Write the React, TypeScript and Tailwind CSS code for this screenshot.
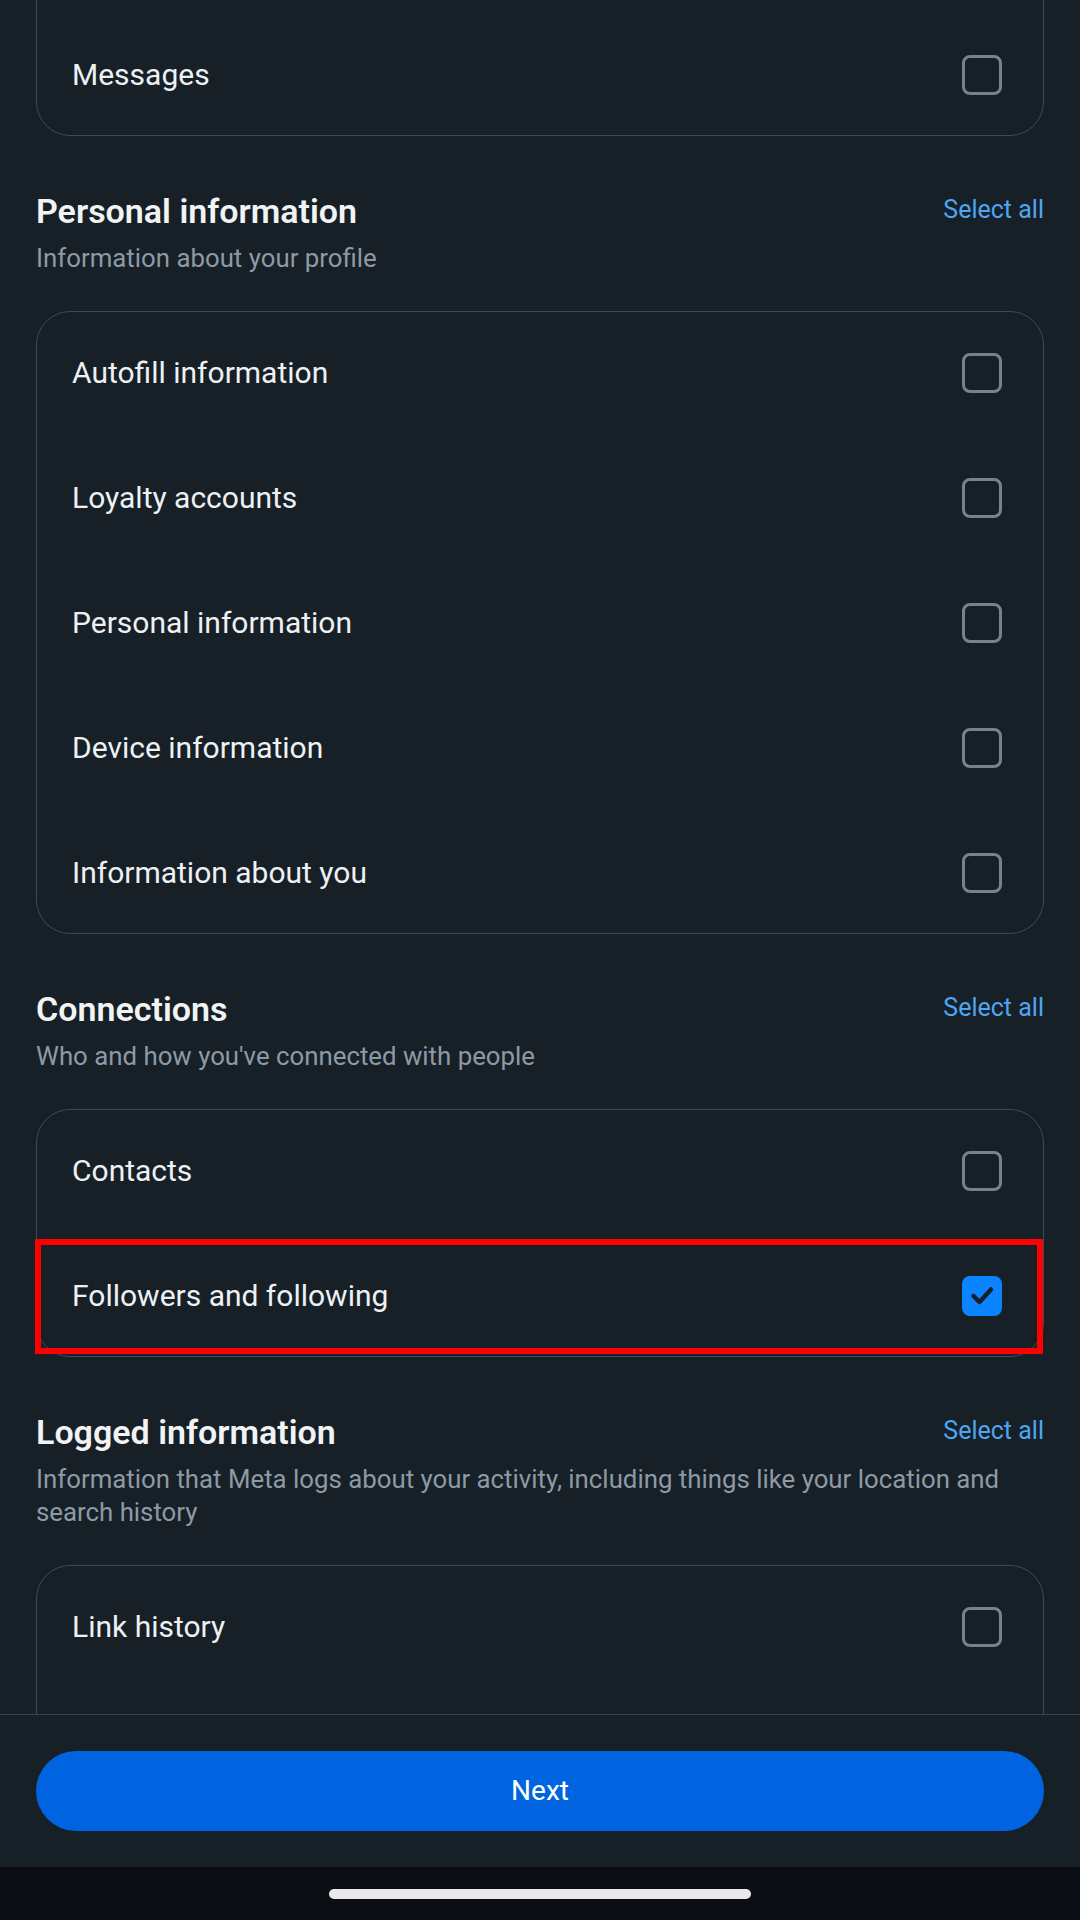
import React from 'react';

type Item = { label: string; checked?: boolean; highlight?: boolean };

const Checkbox = ({ checked }: { checked?: boolean }) => {
	if (checked) {
		return (
			<div className="w-[40px] h-[40px] rounded-[8px] bg-[#0a84ff] flex items-center justify-center">
				<svg width="40" height="40" viewBox="0 0 40 40" fill="none">
					<path
						d="M11.5 20 L17.5 26 L29 13.5"
						stroke="#17202a"
						strokeWidth="4.5"
						strokeLinecap="round"
						strokeLinejoin="round"
					/>
				</svg>
			</div>
		);
	}
	return <div className="w-[40px] h-[40px] rounded-[8px] border-[3px] border-[#73838f]" />;
};

const Row = ({ item }: { item: Item }) => (
	<div className="relative h-[125px] flex items-center justify-between pl-[35px] pr-[41px]">
		<span className="text-[30px] text-[#eef1f3]">{item.label}</span>
		<Checkbox checked={item.checked} />
		{/* red annotation box from the screenshot */}
		{item.highlight && (
			<div className="absolute left-[-2px] right-[0px] top-[6px] bottom-[4px] border-[6px] border-[#ff0000]" />
		)}
	</div>
);

const Card = ({ items, className = '' }: { items: Item[]; className?: string }) => (
	<div className={`border-[1.5px] border-[#3b4b58] rounded-[34px] ${className}`}>
		<div className="-my-[2px]">
			{items.map((it) => (
				<Row key={it.label} item={it} />
			))}
		</div>
	</div>
);

const SectionHeader = ({ title, subtitle }: { title: string; subtitle: string }) => (
	<div className="mt-[57px] mb-[36px]">
		<div className="flex items-start justify-between">
			<h2 className="text-[34px] leading-[36px] font-semibold text-[#f1f3f5]">{title}</h2>
			<button className="text-[25px] leading-[33px] text-[#4ea6f2]">Select all</button>
		</div>
		<p className="mt-[13px] text-[25.8px] leading-[33px] text-[#8d9aa6] pr-[20px]">{subtitle}</p>
	</div>
);

export default function App() {
	return (
		<div
			className="w-[1080px] h-[1920px] flex flex-col bg-[#172027] overflow-hidden"
			style={{ fontFamily: 'Roboto, "Noto Sans", sans-serif' }}
		>
			<div className="flex-1 overflow-hidden px-[36px]">
				{/* list is scrolled; the top of the first card is above the fold */}
				<Card className="-mt-[111px] pt-[124px]" items={[{ label: 'Messages' }]} />

				<SectionHeader title="Personal information" subtitle="Information about your profile" />
				<Card
					items={[
						{ label: 'Autofill information' },
						{ label: 'Loyalty accounts' },
						{ label: 'Personal information' },
						{ label: 'Device information' },
						{ label: 'Information about you' },
					]}
				/>

				<SectionHeader title="Connections" subtitle="Who and how you've connected with people" />
				<Card
					items={[
						{ label: 'Contacts' },
						{ label: 'Followers and following', checked: true, highlight: true },
					]}
				/>

				<SectionHeader
					title="Logged information"
					subtitle="Information that Meta logs about your activity, including things like your location and search history"
				/>
				{/* card runs on under the footer */}
				<Card className="pb-[120px]" items={[{ label: 'Link history' }]} />
			</div>

			<div className="border-t-[1.5px] border-[#33424e] bg-[#172027] px-[36px] pt-[36px] pb-[36px]">
				<button className="w-full h-[80px] rounded-full bg-[#0064e0] text-white text-[28px]">
					Next
				</button>
			</div>

			<div className="h-[53px] bg-[#0a0e12] flex items-center justify-center">
				<div className="w-[422px] h-[10px] rounded-full bg-[#e9e9e9]" />
			</div>
		</div>
	);
}
